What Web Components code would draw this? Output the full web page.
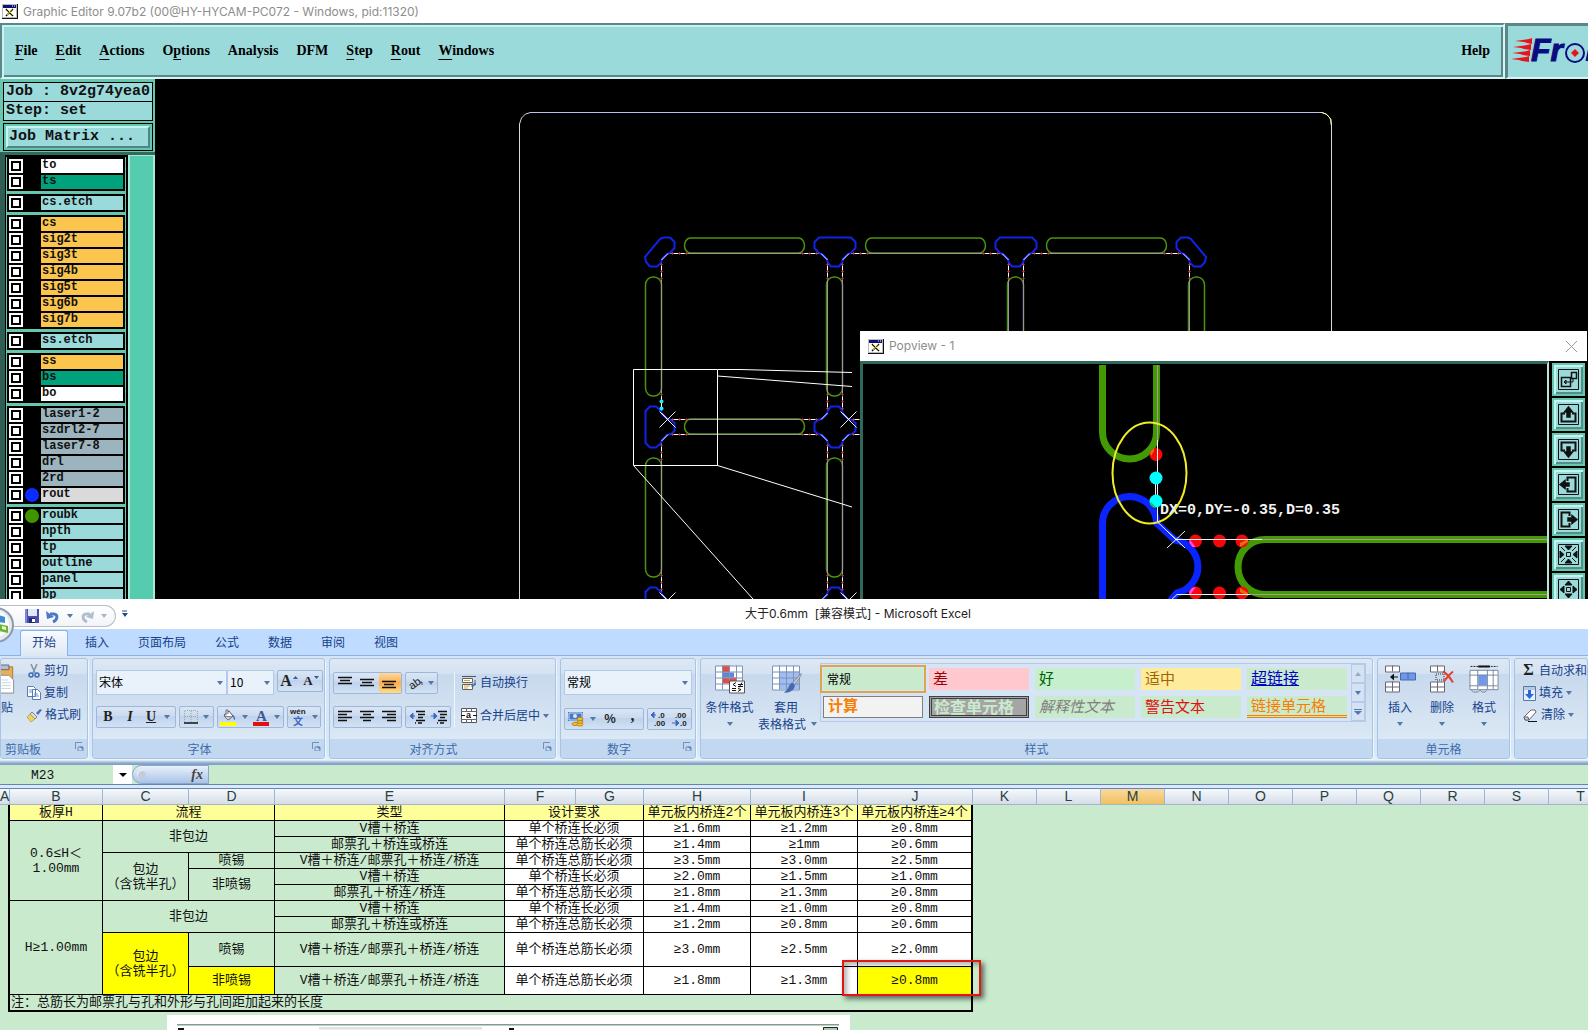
<!DOCTYPE html>
<html lang="zh-CN">
<head>
<meta charset="utf-8">
<title>Graphic Editor and Excel</title>
<style>
html,body{margin:0;height:100%}
body{font-family:"Noto Sans","Noto Sans CJK SC",sans-serif;overflow:hidden;background:#fff}
</style>
</head>
<body>
<desk-top></desk-top>
<script>
const define=(name,css,html,init)=>customElements.define(name,class extends HTMLElement{
  constructor(){super();this.attachShadow({mode:'open'})}
  connectedCallback(){
    const t=document.createElement('template');
    t.innerHTML=`<style>*{box-sizing:border-box}button{font:inherit;color:inherit;background:none;border:0;padding:0;margin:0}${css}</style>${typeof html==='function'?html(this):html}`;
    this.shadowRoot.replaceChildren(t.content.cloneNode(true));
    if(init)init(this);
  }});
const svg=(w,h,body,extra='')=>`<svg width="${w}" height="${h}" viewBox="0 0 ${w} ${h}" fill="none" aria-hidden="true" ${extra}>${body}</svg>`;
const arrow=(c='#5577a5')=>svg(6,4,`<path d="M0 0h6L3 4z" fill="${c}"/>`);

define('desk-top',':host{display:flex;flex-direction:column;height:100vh}cam-editor{flex:1 1 0;min-height:0}excel-app{flex:none}',
'<cam-editor></cam-editor><excel-app></excel-app>');

/* ---------- Graphic editor ---------- */
const appIcon=svg(16,15,'<path d="M0 0h16v15H0z" fill="#111"/><path d="M0 0h15v14H0z" fill="#bbb"/><path d="M1 4h13v9H1z" fill="#fff"/><path d="M1 1h13v3H1z" fill="#10107a"/><path d="M10 2h1m1 0h1" stroke="#fff"/><path d="M4 5l7 7M11 5l-3 3-4 4" stroke="#111" stroke-width="1.5"/><path d="M5 5l6 6M10 5l-5 6" stroke="#e8e020"/>');
define('window-title',':host{display:flex;align-items:center;gap:5px;background:#fff;color:#8d8d8d;font:12px/16px Inter,sans-serif;white-space:nowrap}svg{flex:none}button{margin-left:auto;display:flex}',
 el=>appIcon+'<span><slot></slot></span>'+(el.hasAttribute('closable')?`<button aria-label="Close">${svg(11,11,'<path d="M0 0l11 11M11 0L0 11" stroke="#999"/>')}</button>`:''));

define('cam-editor',`
:host{display:flex;flex-direction:column;background:#000;overflow:hidden}
.cap{height:23px;padding:0 2px;flex:none}
header{display:flex;height:56px;flex:none}
cam-menu{flex:1}
.work{flex:1;min-height:0;display:flex;position:relative;overflow:hidden}
cam-sidebar{flex:none;width:155px}
cam-canvas{flex:1;min-width:0}
pop-view{position:absolute;left:860px;right:1px;top:252px;bottom:0}
`,`<window-title class="cap">Graphic Editor 9.07b2 (00@HY-HYCAM-PC072 - Windows, pid:11320)</window-title>
<header><cam-menu></cam-menu><cam-logo></cam-logo></header>
<div class="work"><cam-sidebar></cam-sidebar><cam-canvas></cam-canvas><pop-view></pop-view></div>`);

define('cam-menu',`
:host{display:flex;align-items:center;gap:18px;padding:0 13px 1px 13px;background:#9bdadb;border:2px solid;border-color:#5b8788 #d6f5f4 #d6f5f4 #5b8788;box-shadow:inset 2px 2px #c9f3f3,inset -2px -2px #5b8788;font:bold 14px/20px "Liberation Serif",serif;color:#000}
button{white-space:nowrap}u{text-underline-offset:4px;text-decoration-thickness:1px}button:last-child{margin-left:auto}`,
'<button><u>F</u>ile</button><button><u>E</u>dit</button><button><u>A</u>ctions</button><button>O<u>p</u>tions</button><button>Analysis</button><button>DFM</button><button><u>S</u>tep</button><button><u>R</u>out</button><button><u>W</u>indows</button><button>Help</button>');

define('cam-logo',':host{display:block;width:83px;background:#9bdadb;border:solid;border-width:3px 0 2px 3px;border-color:#5b8788 #5b8788 #d6f5f4 #5b8788;overflow:hidden}',
svg(80,51,`<g fill="#e8141c"><path d="M7 15l14-2 3-1v6l-5-1-3-1z"/><path d="M5 21l14-2 4-1v6l-7-1-3-1z"/><path d="M4 27l15-2 3-1v6l-7-1-3-1z"/><path d="M3 33l15-2 3-1v6l-7-1-3-1z"/></g>
<text x="23" y="35" font-family="Liberation Sans" font-weight="bold" font-style="italic" font-size="32" fill="#0b0b80" stroke="#0b0b80">Fr</text>
<circle cx="67" cy="27" r="9" stroke="#0b0b80" stroke-width="2"/><path d="M67 23l4 4-4 4-4-4z" fill="#e8141c"/><path d="M79 35l3-14" stroke="#0b0b80" stroke-width="3"/>`));

define('layer-row',`
:host{display:flex;height:14px;margin-bottom:2px}
input{appearance:none;margin:0;width:14px;height:14px;border:2px solid #fff;background:#fff;box-shadow:inset 0 0 0 2px #000;flex:none}
i{width:18px;display:flex;align-items:center;justify-content:center;flex:none}i b{width:14px;height:14px;border-radius:7px;background:var(--dot,none)}
label{flex:1;background:var(--bg);font:bold 12px/13px "Liberation Mono",monospace;padding-left:1px;color:#111;overflow:hidden}`,
'<input type="checkbox" id="c"><i><b></b></i><label for="c"><slot></slot></label>');

define('cam-sidebar',`
:host{display:flex;flex-direction:column;background:#66c6ae;padding:3px 2px 0 3px;font:bold 15px/18px "Liberation Mono",monospace;color:#111}
.info{border:1px solid #000;height:20px;background:#9bdadb;padding-left:2px;white-space:nowrap;overflow:hidden;flex:none}
.info+.info{margin-top:-1px}
.mx{margin:2px 0 1px;border:1px solid #000;padding:2px;height:28px;flex:none}
.mx button{width:100%;height:22px;text-align:left;background:#9bdadb;border:2px solid;border-color:#c4f5f0 #4f8588 #4f8588 #c4f5f0;padding-left:1px;line-height:18px}
.low{flex:1;min-height:0;display:flex;margin:0 -2px 0 -3px;border-top:3px solid #2f6a5c;border-left:5px solid #2f5f54}
.list{width:123px;border:1px solid #000;border-width:2px 2px 0 1px;padding:0 1px;overflow:hidden;flex:none}
.g{display:flow-root;background:#000;padding:2px 2px 0 2px;margin-bottom:3px}
.bar{flex:1;background:#55ccad;border:solid #a5ead4;border-width:1px 2px 0 2px}
`,()=>{
 const R=(n,c,d)=>`<layer-row style="--bg:${c}${d?';--dot:'+d:''}">${n}</layer-row>`;
 const O='#fcc64e',B='#9bdadb',G='#00a27c',S='#9cb4bd';
 const groups=[[['to','#fff'],['ts',G]],[['cs.etch',B]],['cs','sig2t','sig3t','sig4b','sig5t','sig6b','sig7b'].map(n=>[n,O]),[['ss.etch',B]],[['ss',O],['bs',G],['bo','#fff']],
 [...['laser1-2','szdrl2-7','laser7-8','drl','2rd'].map(n=>[n,S]),['rout','#dadada','#0a2cff']],[['roubk',B,'#3f9400'],...['npth','tp','outline','panel','bp'].map(n=>[n,B])]];
 return `<div class="info">Job : 8v2g74yea0</div><div class="info">Step: set</div><div class="mx"><button>Job Matrix ...</button></div>
 <div class="low"><div class="list">${groups.map(g=>`<div class="g">${g.map(r=>R(...r)).join('')}</div>`).join('')}</div><div class="bar"></div></div>`;
});

define('cam-canvas',':host{display:block;overflow:hidden;background:#000}svg{display:block}',()=>{
 const P=181;let s='';
 s+='<path d="M519.5 599V124l2-6 4-4 5-1.500H1322l4 1.500 4 4 1.500 6V599" stroke="#d8d8e0"/><path d="M530 112.500H1320" stroke="#b8c0f0"/><path d="M1322 112.500l5 2 4 5v5" stroke="#ffffa0"/>';
 for(let j=0;j<2;j++)for(let i=0;i<3;i++){
  const x=661.5+P*i,y=253.5+P*j;
  s+=`<path d="M${x+6.5} ${y}h153l6.500 6.500v153l-6.500 6.500h-153l-6.500-6.500v-153z" stroke="#fff"/>`;
 }
 for(let j=0;j<2;j++)for(let i=0;i<3;i++)s+=`<rect x="${684.5+P*i}" y="${238+P*j}" width="120" height="15" rx="6" ry="7.500" stroke="#4c9210" stroke-width="1.500"/>`;
 for(let j=0;j<2;j++)for(let i=0;i<4;i++)s+=`<rect x="${645.5+P*i}" y="${277+P*j}" width="16" height="119" rx="7.500" ry="8" stroke="#4c9210" stroke-width="1.500"/>`;
 const T='M-16-8.500H16L20.500-4V2L16 7l-3 1-5 5-1 4-3 3.500h-8L-7 17l-1-4-5-5-3-1-4.500-5v-6z';
 const C='M-9 11L6-7l3-1.500h7L20.500-4V2L16 7l-3 1-5 5-1 4-4 3.500h-7L-8 16z';
 const X='M-4-20.500h8L7-17l1 4 5 5 4 1 3.500 3v8L17 7l-4 1-5 5-1 4-3 3.500h-8L-7 17l-1-4-5-5-4-1-3.500-3v-8L-17-7l4-1 5-5 1-4z';
 const use=(d,x,y,t='')=>`<path d="${d}" transform="translate(${x} ${y}) ${t}" stroke="#1024e8" stroke-width="2"/>`;
 s+=use(C,654,246)+use(C,1197,246,'scale(-1 1)')+use(T,835,246)+use(T,1016,246);
 for(const y of [427,608]){s+=use(T,654,y,'rotate(-90)')+use(X,835,y)+use(X,1016,y)+use(T,1197,y,'rotate(90)');}
 for(let j=0;j<2;j++)for(let i=0;i<3;i++){
  const x=661.5+P*i,y=253.5+P*j;
  s+=`<path d="M${x+6.5} ${y}l-6.500 6.500M${x+159.5} ${y}l6.500 6.500M${x+6.5} ${y+166}l-6.500-6.500M${x+159.5} ${y+166}l6.500-6.500" stroke="#e8e8ff"/>`;
  s+=`<path d="M${x+23} ${y}h120M${x+23} ${y+166}h120M${x} ${y+23}v120" stroke="#9c969c"/><path d="M${x+166} ${y+23}v120" stroke="#9c969c"/>`;
  if(i)s+=`<path d="M${x} ${y+23}v120" stroke="#a08cc0"/>`;
  for(const o of [11,18,25,141,148,155])for(const [a,b] of [[x+o,y],[x+o,y+166],[x,y+o],[x+166,y+o]])
   s+=`<path d="M${a-1.5} ${b}h3M${a} ${b-1.5}v3" stroke="#c43030" stroke-opacity=".75"/>`;
  const mx=x+6,my=y+166;s+=`<path d="M${mx-8} ${my-8}l16 16M${mx+8} ${my-8}l-16 16" stroke="#eee"/>`;
 }
 s+='<g fill="#20f0f0"><circle cx="661.500" cy="401.500" r="2"/><circle cx="661.500" cy="408.500" r="2"/></g>';
 s+='<path d="M633.500 369.500h84v96h-84zM717.500 369.500H740L852 372.500M717.500 376L852 386.500M717.500 465.500L852 507M633.500 465.500L753 599" stroke="#fff"/>';
 return `<svg width="1433" height="520" viewBox="155 79 1433 520" fill="none" role="img" aria-label="Panel layout">${s}</svg>`;
});

define('tool-key',`:host{display:block;height:33px;flex:none}
button{width:100%;height:100%;display:flex;align-items:center;justify-content:center;background:#9bdadb;border:2px solid #66c6ae;box-shadow:inset 2px 2px #c4f5f0,inset -2px -2px #4f9088}`,
el=>{const d={
 zoom:'<path d="M3.500 8.500h9v9h-9zM13.500 3.500h5v6h-5z" stroke-width="1.500"/><path d="M6 13h9v-3M6 13l2-2v4z"/>',
 up:'<path d="M7 9.500H3.500v8h14v-8H14" stroke-width="2"/><path d="M10.500 3l4 5h-8zM9 8h3v5H9z" fill="#111" stroke-width="1.500"/>',
 down:'<path d="M7 11.500H3.500v-8h14v8H14" stroke-width="2"/><path d="M10.500 18l4-5h-8zM9 8h3v5H9z" fill="#111" stroke-width="1.500"/>',
 left:'<path d="M9.500 7V3.500h8v14h-8V14" stroke-width="2"/><path d="M2 10.500l5-4v8zM7 9h4v3H7z" fill="#111" stroke-width="1.500"/>',
 right:'<path d="M11.500 7V3.500h-8v14h8V14" stroke-width="2"/><path d="M19 10.500l-5-4v8zM10 9h4v3h-4z" fill="#111" stroke-width="1.500"/>',
 shrink:'<path d="M8.500 8.500h4v4h-4z"/><path d="M7 2h7l-3.500 4zM7 19h7l-3.500-4zM2 7v7l4-3.500zM19 7v7l-4-3.500zM3 3l4 4M18 3l-4 4M3 18l4-4M18 18l-4-4" fill="#111"/>',
 grow:'<path d="M8.500 8.500h4v4h-4z"/><path d="M7 6h7l-3.500-4zM7 15h7l-3.500 4zM6 7v7l-4-3.500zM15 7v7l4-3.500z" fill="#111"/>'
 }[el.getAttribute('icon')];
 return `<button aria-label="${el.getAttribute('icon')}">${svg(21,21,`<path d="M.5.5h20v20H.5z" stroke="#111"/><g stroke="#111">${d}</g>`)}</button>`});

define('pop-view',`
:host{display:flex;flex-direction:column;background:#000}
.cap{height:30px;padding:0 10px 0 8px;flex:none}
.b{flex:1;min-height:0;display:flex;overflow:hidden}
.v{flex:1;min-width:0;border:solid;border-width:3px 2px 0 3px;border-color:#30695c #b4e6da #000 #30695c;overflow:hidden}
.v svg{display:block}
.t{width:38px;padding:2px 2px 0 3px;display:flex;flex-direction:column;gap:2px;flex:none}
`,`<window-title class="cap" closable>Popview - 1</window-title>
<div class="b"><div class="v"><svg width="684" height="235" viewBox="863 364 684 235" fill="none" role="img" aria-label="Magnified view">
<g stroke="#439a05" stroke-width="7"><path d="M1102.500 365V432a27 27 0 0 0 54 0V365"/><path d="M1547 539.500H1265a27 27.500 0 0 0 0 55H1547"/></g>
<path d="M1102.500 600V524a27 27 0 0 1 54-1L1175 540a27 27 0 0 1 2 53l-7 8" stroke="#0a24ff" stroke-width="7"/>
<g fill="#f60808"><circle cx="1156" cy="454.500" r="6.500"/><circle cx="1195.500" cy="541" r="6.500"/><circle cx="1219.500" cy="541" r="6.500"/><circle cx="1242" cy="541" r="6.500"/><circle cx="1195.500" cy="593" r="6.500"/><circle cx="1219.500" cy="593" r="6.500"/><circle cx="1242" cy="593" r="6.500"/></g>
<g fill="#ff48ff"><path d="M1189.500 539l6 8-3 0-3-4zM1190 595l6-8-4 1-3 4z"/></g><g fill="#e07010"><path d="M1240 547l8-5v-3l-8 4zM1240 588l8 5v3l-8-4zM1150 452l4-4v3l-3 5z"/></g>
<path d="M1157.500 365V440M1262 539.500H1547M1250 594.500H1547" stroke="#a8989c"/>
<path d="M1157.500 440V522L1176 539.500H1262M1155.500 478v23M1170 601l7-6.500h73M1167 531l18 17M1185 531l-18 17" stroke="#f4f4f4"/>
<g fill="#0ff"><circle cx="1156" cy="478" r="6.500"/><circle cx="1156" cy="501" r="6.500"/></g><path d="M1151 502l5 5.500h-3l-3-3z" fill="#20c040"/>
<ellipse cx="1149.500" cy="473" rx="37" ry="50.500" stroke="#f0ec28" stroke-width="2"/>
<text x="1160" y="514" font-family="Liberation Mono" font-size="15" font-weight="bold" fill="#f2f2f2">DX=0,DY=-0.35,D=0.35</text>
</svg></div><div class="t"><tool-key icon="zoom"></tool-key><tool-key icon="up"></tool-key><tool-key icon="down"></tool-key><tool-key icon="left"></tool-key><tool-key icon="right"></tool-key><tool-key icon="shrink"></tool-key><tool-key icon="grow"></tool-key></div></div>`);

/* ---------- Spreadsheet ---------- */
define('excel-app',`:host{display:block;background:#c9eacd;font:12px/16px "Noto Sans CJK SC",sans-serif;color:#15428b}`,
'<quick-bar></quick-bar><ribbon-tabs></ribbon-tabs><ribbon-panel></ribbon-panel><formula-bar></formula-bar><work-sheet></work-sheet>');

const disk=svg(14,14,'<path d="M0 0h14v14H0z" fill="#4a4fae"/><path d="M3 0h9v7H3z" fill="#dfe8f8"/><path d="M0 0h2v14H0z" fill="#7d86d8"/><path d="M4 9h6v5H4z" fill="#222a70"/><path d="M7 10h3v3H7z" fill="#fff"/>');
const undo=c=>svg(14,14,`<path d="M4 5h4c4 0 4 6-1 8" stroke="${c}" stroke-width="3"/><path d="M0 2l1 8 7-2z" fill="${c}"/>`);
define('quick-bar',`
:host{display:flex;height:30px;background:#fff;position:relative;align-items:center}
.pill{width:116px;height:22px;display:flex;align-items:center;gap:7px;padding-left:25px;margin-top:3px;border:1px solid #b9bdc6;border-left:0;border-radius:0 11px 11px 0;background:linear-gradient(#fff,#f2f4f8);flex:none}
button{display:flex}.r svg{transform:scaleX(-1)}
.title{flex:1;text-align:center;color:#222;font-family:Inter,"Noto Sans CJK SC",sans-serif;white-space:pre;padding-right:1px}
.m{margin-left:5px}.orb{position:absolute;left:-22px;top:8px;z-index:2}`,
`<button class="orb" aria-label="Office">${svg(36,37,'<circle cx="18" cy="18" r="17" fill="#e6eaf0" stroke="#8b98ad" stroke-width="2"/><circle cx="18" cy="17" r="13" fill="#f8fafc"/><path d="M20 8l7 2v6l-7-1z" fill="#3c8ed0"/><path d="M21 17l9 2v7l-9-2z" fill="#6cb52e"/><path d="M24 19l4 1v3l-4-1z" fill="#e9f7d8"/>')}</button>
<div class="pill"><button aria-label="Save">${disk}</button><button aria-label="Undo">${undo('#4c78c8')}</button><button aria-label="Undo list">${arrow()}</button><button class="r" aria-label="Redo">${undo('#b0bfd0')}</button><button aria-label="Redo list">${arrow('#a7b4c6')}</button></div>
<button class="m" aria-label="Customize">${svg(8,8,'<path d="M1 1h5" stroke="#234a80"/><path d="M1 3h6L4 7z" fill="#234a80"/>')}</button><div class="title">大于0.6mm  [兼容模式] - Microsoft Excel</div>`);

define('ribbon-tabs',`:host{display:flex;gap:5px;height:27px;padding:1px 0 0 20px;background:#bfdbff;border-bottom:1px solid #8db2e3}
button{padding:0 12px 2px;height:26px;line-height:22px;white-space:nowrap}
.on{background:linear-gradient(#f8fbff,#dde8f5);border:1px solid #8db2e3;border-bottom:0;border-radius:3px 3px 0 0;padding:0 11px 3px}`,
'<button class="on">开始</button><button>插入</button><button>页面布局</button><button>公式</button><button>数据</button><button>审阅</button><button>视图</button>');

define('ribbon-group',`
:host{display:flex;flex-direction:column;height:101px;flex:none;border:1px solid #a9c3e2;border-radius:3px;background:linear-gradient(#dde8f5 0,#d5e2f1 15px,#c8d9ed 15px,#dbe8f5 80px);box-shadow:1px 1px #edf5ff;overflow:hidden}
.c{height:80px;display:flex}
footer{height:19px;background:#c1d8f0;color:#3e6aaa;display:flex;align-items:center;line-height:18px;white-space:nowrap}
span{flex:1;text-align:center}span.m{padding-right:var(--shift,6px)}footer svg{margin:0 3px 5px 0}`,
el=>`<div class="c"><slot></slot></div><footer><span${el.hasAttribute('more')?' class="m"':''}>${el.getAttribute('label')||''}</span>${el.hasAttribute('more')?svg(9,9,'<path d="M.5 7V.5H7M3 5h5v4H3z" stroke="#7390b8"/><path d="M4 4l4 4V5z" fill="#5f7fae"/>'):''}</footer>`);
define('key-group',`:host{display:flex;height:22px;border:1px solid #9db7dc;border-radius:2px;background:linear-gradient(#d9e6f5,#cbdaef 45%,#bfd2ec 45%,#d2e2f4);flex:none}
::slotted(*){flex:1;display:flex;align-items:center;justify-content:center;gap:5px}`,'<slot></slot>');
define('combo-box',`:host{display:grid;height:25px;align-items:center}
select,svg{grid-area:1/1}select{appearance:none;width:100%;height:25px;margin:0;padding:0 2px 3px;background:#e9f1fb;border:1px solid #b3cbe8;border-radius:0;font:12px "Noto Sans CJK SC",sans-serif;color:#000}
svg{justify-self:end;margin-right:4px}`,el=>`<select aria-label="${el.getAttribute('name')}"><option>${el.getAttribute('value')}</option></select>${arrow()}`);

const lines=(a,y=0)=>svg(15,14,a.map(([x,w],i)=>`<path d="M${x} ${y+i*3+1.5}h${w}" stroke="#111" stroke-width="1.500"/>`).join(''));
const ic={
 cut:svg(14,14,'<path d="M4 0l4 9M10 0L6 9" stroke="#8090a8" stroke-width="1.500"/><circle cx="4" cy="11" r="2" stroke="#3c6ab8" stroke-width="1.500"/><circle cx="10" cy="11" r="2" stroke="#3c6ab8" stroke-width="1.500"/>'),
 copy:svg(14,14,'<path d="M.5.5h6l2 2v8h-8zM5.500 3.500h5l3 3v7h-8z" fill="#fff" stroke="#5578b8"/><path d="M2 4h3M2 6h3M7 8h4M7 10h5" stroke="#6c92d8"/>'),
 brush:svg(15,14,'<path d="M9 5l4-4 2 1-4 5z" fill="#5570b0"/><path d="M5 4l5 5-2 2-5-5z" fill="#d8dce8" stroke="#788"/><path d="M3 6l5 5-4 3-4-5z" fill="#f0d060" stroke="#b89430" stroke-width=".7"/>'),
 border:svg(14,14,'<path d="M.5 1v11M7 1v11M13.500 1v11M1 .5h12M1 6.500h12" stroke="#9aa" stroke-dasharray="1 1"/><path d="M0 13h14" stroke="#111" stroke-width="1.500"/>'),
 fill:svg(17,17,'<path d="M4 6l5-4 4 5-5 4z" fill="#fff" stroke="#456"/><path d="M6 6V1h2v4M4 7l8 1-4 3z" stroke="#777" fill="#dce"/><path d="M13 6c2 1 2 3 2 5-1 0-2-2-2-5z" fill="#3c6ab8"/><path d="M0 13h16v4H0z" fill="#ff0"/>'),
 wrap:svg(16,16,'<path d="M1 1.500h14" stroke="#555"/><path d="M1.500 3.500h10v4h-10zM1.500 9.500h10v5h-10z" fill="#fff" stroke="#665"/><path d="M3 5.500h6M3 11h6M3 13h4" stroke="#e09848"/><path d="M14 5v4l-2 2M15 9l-4 0v3z" stroke="#4468a8"/>'),
 merge:svg(16,15,'<path d="M.5.5h15v14H.5z" fill="#fff" stroke="#555"/><path d="M0 3.500h16M0 11.500h16M5.500 0v3M10.500 0v3M5.500 12v3M10.500 12v3" stroke="#666"/><path d="M0 7.500h4M12 7.500h4" stroke="#111"/><text x="5" y="10" font-family="Liberation Sans" font-size="9" font-weight="bold" fill="#111">a</text>'),
 money:svg(17,16,'<path d="M0 1h15v9H0z" fill="#4878c0"/><path d="M1 2h13v7H1z" stroke="#c8dcf8"/><circle cx="7" cy="5" r="2" fill="#d8e8ff"/><ellipse cx="12" cy="8" rx="3" ry="1.500" fill="#f4c430" stroke="#b98a1c"/><ellipse cx="12" cy="11" rx="3" ry="1.500" fill="#f4c430" stroke="#b98a1c"/><ellipse cx="7" cy="13" rx="3" ry="1.500" fill="#f4c430" stroke="#b98a1c"/><ellipse cx="12" cy="13.500" rx="3" ry="1.500" fill="#f4c430" stroke="#b98a1c"/>'),
 cond:svg(30,28,'<path d="M.5.5h27v24H.5z" fill="#fff"/><path d="M7 0h7v7H7zM7 12h14v6H7z" fill="#e84a3c"/><path d="M7 7h12v5H7z" fill="#5a86dc"/><path d="M.5.5h27v24H.5zM7.500 0v24M14.500 0v24M21.500 0v24M0 6.500h27M0 12.500h27M0 18.500h27" stroke="#7d94b8"/><path d="M14.500 15.500h15v12h-15z" fill="#fff" stroke="#555"/><path d="M21 17l-3 2 3 2M17 23h4M17 25h4M23 19h5M23 21h5M27 17l-3 5M23 23l3 1-3 2" stroke="#111"/>'),
 table:svg(30,28,'<path d="M.5.5h27v24H.5z" fill="#fff"/><path d="M7 6h20v18H7z" fill="#9fbdf0"/><path d="M.5.5h27v24H.5zM7.500 0v24M14.500 0v24M21.500 0v24M0 6.500h27M0 12.500h27M0 18.500h27" stroke="#7d94b8"/><path d="M29 8l-8 9 2 2 6-9z" fill="#c8ccd4" stroke="#777" stroke-width=".7"/><path d="M20 17l3 3c-1 5-6 8-11 7 4-2 4-7 8-10z" fill="#4668b0"/>'),
 ins:svg(31,28,'<path d="M.5.5h14v6H.5zM.5 16.500h14v10H.5zM7.500 0v6M7.500 16v10M0 21.500h14" fill="#fff" stroke="#667"/><path d="M15.500 7.500h15v7h-15zM23 7v7" fill="#7097e4" stroke="#4468b0"/><path d="M13 11.500H8" stroke="#111"/><path d="M9 8v7l-4-3.500z" fill="#111"/>'),
 del:svg(25,28,'<path d="M.5.5h14v6H.5zM.5 16.500h14v10H.5zM7.500 0v6M7.500 16v10M0 21.500h14" fill="#fff" stroke="#667"/><path d="M6 8.500h8v6H6z" stroke="#333" stroke-dasharray="1 1"/><path d="M13 6c4 2 7 6 10 11M23 6c-4 3-7 7-9 10" stroke="#e4402c" stroke-width="2"/>'),
 fmt:svg(31,30,'<path d="M1 1.500h28" stroke="#222" stroke-dasharray="2 1"/><path d="M9 1.500h12" stroke="#111" stroke-width="2"/><path d="M.5 5.500h29v20H.5z" fill="#fff"/><path d="M9 10h9v11H9z" fill="#6f98e8"/><path d="M.5 5.500h29v20H.5zM8.500 5v20M18.500 5v20M24.500 5v20M0 10.500h29M0 21.500h29M2 26l2 2h5l2-2 2 2h3l2-2" stroke="#7888a0"/>'),
 down:svg(13,15,'<path d="M.5.5h12v14H.5z" fill="#e4eefc" stroke="#5878a8"/><path d="M1 1h11v3H1z" fill="#b8c8e0"/><path d="M5 4h3v4h3l-4.500 5L2 8h3z" fill="#2c68d8"/>'),
 erase:svg(15,13,'<path d="M1 8l7-7h4l1 2-7 8H2z" fill="#fff" stroke="#667"/><path d="M1 8h4l1 3H2z" fill="#c0c8d8" stroke="#667"/><path d="M5 12.500h9" stroke="#111"/>'),
 paste:svg(14,31,'<path d="M-8 2H12v26H-8z" fill="#e8b050" stroke="#a87830"/><path d="M-4 0H8v5H-4z" fill="#b8bcc8" stroke="#667"/><path d="M-4 11H8l5 5v14H-4z" fill="#fff" stroke="#889"/><path d="M0 16h7M0 19h10M0 22h10M0 25h10" stroke="#c8d0dc"/>')
};
const L4=[[0,14],[0,9],[0,14],[0,9]],C4=[[0,14],[3,8],[0,14],[3,8]],R4=[[0,14],[5,9],[0,14],[5,9]],M3=[[0,14],[2,10],[0,14]];
const indent=d=>svg(16,14,`<path d="M7 1.500h9M9 4.500h7M9 7.500h5M7 10.500h9M6 13h1M9 13h4" stroke="#111" stroke-width="1.500"/><path d="${d?'M0 6h3M3 3v6l3-3z':'M3 6h3M4 3v6L1 6z'}" stroke="#3c6ac0" fill="#3c6ac0"/>`);

define('ribbon-panel',`
:host{display:flex;gap:4px;height:109px;padding:2px 0 0;background:linear-gradient(#d5e4f6,#d8e8f8 98px,#e5f2fd 104px,#8eaccc 107px,#7c9cc0);overflow:hidden;white-space:nowrap}
svg{flex:none;overflow:visible}
.col{display:flex;flex-direction:column}.row{display:flex;align-items:center}
.rows{padding:11px 3px 0;gap:11px;width:100%}.rows>.row{height:25px;gap:3px}.rows>.row+.row{height:22px}
.cmd{display:flex;align-items:center;gap:3px;height:22px}
.cmd span,.cmd b{font-weight:400;padding-bottom:2px}
.big{display:flex;flex-direction:column;align-items:center;padding-top:6px;height:76px}
.big b{font-weight:400;line-height:17px;display:flex;align-items:center;gap:5px}.big>svg:first-child{margin-bottom:4px;height:29px}
.big>svg:last-child{margin-top:7px}
.clip .big{width:14px;align-items:flex-start}.clip .big b{margin-left:-12px}
.clip .col{padding:1px 0 0 12px}
.ser{font:bold 16px "Liberation Serif",serif;color:#222}
.gal{display:flex;margin:4px 0 0 8px;height:59px;border:1px solid #b6cae6;background:#d6e5f6}
.sw{display:grid;grid-template-columns:repeat(5,100px);grid-auto-rows:22px;gap:6px;padding:4px 3px 0 2px;width:530px}
.sw button{text-align:left;padding:0 0 4px 4px;font-size:15px;line-height:17px;overflow:hidden;background:#c9eacd}
.sc{display:flex;flex-direction:column;width:14px}.sc button{flex:1;display:flex;align-items:center;justify-content:center;border:1px solid #b6cae6;background:#d3e2f4}
.cells{width:100%;padding-left:1px;align-items:flex-start}.cells button{width:42px;margin:0}
`,`
<ribbon-group class="clip" label="剪贴板" more style="width:88px;--shift:30px"><button class="big">${ic.paste}<b>粘贴</b></button><div class="col"><button class="cmd">${ic.cut}<b>剪切</b></button><button class="cmd">${ic.copy}<b>复制</b></button><button class="cmd">${ic.brush}<b>格式刷</b></button></div></ribbon-group>
<ribbon-group label="字体" more style="width:233px"><div class="rows col">
 <div class="row" style="align-items:flex-start"><div class="row"><combo-box name="字体" value="宋体" style="width:131px"></combo-box><combo-box name="字号" value="10" style="width:47px"></combo-box></div>
 <key-group style="width:46px"><button class="ser" style="gap:1px">A${svg(5,12,'<path d="M0 4h5L2.500 1z" fill="#345a98"/>')}</button><button class="ser" style="font-size:13px;gap:1px">A${svg(5,12,'<path d="M0 1h5L2.500 4z" fill="#345a98"/>')}</button></key-group></div>
 <div class="row"><key-group style="width:80px"><button class="ser" style="flex:0 0 22px;font-size:14px">B</button><button class="ser" style="flex:0 0 22px;font-size:14px;font-style:italic">I</button><button class="ser" style="font-size:14px;gap:8px"><u>U</u>${arrow()}</button></key-group><key-group style="width:35px"><button>${ic.border}${arrow()}</button></key-group>
 <key-group style="width:67px"><button>${ic.fill}${arrow()}</button><button>${svg(16,17,'<text x="3" y="12" font-family="Liberation Serif" font-size="15" font-weight="bold" fill="#3c5a94">A</text><path d="M0 13h16v4H0z" fill="#e01010"/>')}${arrow()}</button></key-group><key-group style="width:34px"><button>${svg(17,18,'<text x="0" y="6" font-family="Liberation Sans" font-size="8" font-weight="bold" fill="#222">wén</text><text x="3" y="17" font-family="Noto Sans CJK SC" font-size="10" font-weight="bold" fill="#3c68c0">文</text>')}${arrow()}</button></key-group></div>
</div></ribbon-group>
<ribbon-group label="对齐方式" more style="width:227px"><div class="row" style="width:100%"><div class="rows col" style="width:124px;height:100%">
 <div class="row"><key-group style="width:69px"><button>${lines(M3)}</button><button>${lines(M3,2)}</button><button style="background:linear-gradient(#fbd9a0,#fdaf4c 50%,#fddc88)">${lines(M3,4)}</button></key-group><key-group style="width:33px"><button>${svg(14,14,'<text x="0" y="11" font-family="Liberation Sans" font-size="11" transform="rotate(-35 6 8)" fill="#222">ab</text><path d="M4 13l9-7M13 6v3M13 6h-3" stroke="#555"/>')}${arrow()}</button></key-group></div>
 <div class="row"><key-group style="width:69px"><button>${lines(L4)}</button><button>${lines(C4)}</button><button>${lines(R4)}</button></key-group><key-group style="width:46px"><button>${indent(0)}</button><button>${indent(1)}</button></key-group></div></div>
 <div class="col" style="border-left:1px solid #eef5fd;padding-left:6px;gap:11px"><button class="cmd">${ic.wrap}<b>自动换行</b></button><button class="cmd">${ic.merge}<b>合并后居中</b> ${arrow()}</button></div></div></ribbon-group>
<ribbon-group label="数字" more style="width:136px"><div class="rows col"><combo-box name="数字格式" value="常规"></combo-box>
 <div class="row"><key-group style="width:80px"><button>${ic.money}${arrow()}</button><button style="flex:0 0 24px;color:#222;font-weight:bold;padding-bottom:2px">%</button><button class="ser" style="flex:0 0 21px;padding-bottom:6px">,</button></key-group><key-group style="width:45px"><button>${svg(16,16,'<text x="7" y="7" font-family="Liberation Sans" font-size="8" font-weight="bold" fill="#222">.0</text><text x="3" y="15" font-family="Liberation Sans" font-size="8" font-weight="bold" fill="#222">.00</text><path d="M5 4H2M3 1v6L0 4z" stroke="#3c6ac0" fill="#3c6ac0"/>')}</button><button>${svg(16,16,'<text x="3" y="7" font-family="Liberation Sans" font-size="8" font-weight="bold" fill="#222">.00</text><text x="8" y="15" font-family="Liberation Sans" font-size="8" font-weight="bold" fill="#222">.0</text><path d="M0 12h4M4 9v6l3-3z" stroke="#3c6ac0" fill="#3c6ac0"/>')}</button></key-group></div></div></ribbon-group>
<ribbon-group label="样式" style="width:673px"><button class="big" style="width:57px">${ic.cond}<b>条件格式</b>${arrow()}</button><button class="big" style="width:54px;align-items:flex-start"><svg width="44" height="28" viewBox="-14 0 44 28" fill="none">${ic.table}</svg><b style="padding-left:16px">套用</b><b>表格格式${arrow()}</b></button>
 <div class="gal"><div class="sw">
 <button style="font-size:12px;color:#000;padding-bottom:2px;outline:2px solid #dfa548;outline-offset:1px">常规</button><button style="background:#ffc7ce;color:#9c0006">差</button><button style="background:#c6efce;color:#006100">好</button><button style="background:#ffeb9c;color:#9c6500">适中</button><button style="color:#0000c8;font-size:16px;text-decoration:underline">超链接</button>
 <button style="background:#f2f2f2;color:#fa7d00;font-weight:bold;border:1px solid #7f7f7f;line-height:16px">计算</button><button style="background:#a5a5a5;color:#c9eacd;font-size:16px;font-weight:bold;border:3px double #3f3f3f;padding:0 0 2px 2px;line-height:14px">检查单元格</button><button style="color:#7f7f7f;font-style:italic">解释性文本</button><button style="color:#e01010">警告文本</button><button style="color:#fa7d00;border-bottom:3px double #fa7d00;padding-bottom:2px">链接单元格</button>
 </div><div class="sc"><button aria-label="Up">${svg(6,4,'<path d="M0 4h6L3 0z" fill="#9ab"/>')}</button><button aria-label="Down">${arrow()}</button><button aria-label="More">${svg(8,8,'<path d="M0 1.500h8" stroke="#5577a5"/><path d="M0 3h8L4 7z" fill="#5577a5"/>')}</button></div></div></ribbon-group>
<ribbon-group label="单元格" style="width:133px"><div class="row cells"><button class="big">${ic.ins}<b>插入</b>${arrow()}</button><button class="big">${ic.del}<b>删除</b>${arrow()}</button><button class="big">${ic.fmt}<b>格式</b>${arrow()}</button></div></ribbon-group>
<ribbon-group style="flex:1"><div class="col" style="padding:1px 0 0 8px"><button class="cmd" style="gap:5px"><b class="ser" style="width:11px;font-weight:bold">Σ</b><b>自动求和</b></button><button class="cmd">${ic.down}<b>填充</b> ${arrow()}</button><button class="cmd">${ic.erase}<b>清除</b> ${arrow()}</button></div></ribbon-group>
`);

define('formula-bar',`
:host{display:flex;height:23px;padding-bottom:3px;background:linear-gradient(#c9eacd 19px,#5f86b4 19px,#5f86b4 20px,#dbe9fa 20px)}
input{margin:0;border:0;padding:0;font:13px/19px "Liberation Mono",monospace;color:#111;background:#c9eacd;height:19px;border-radius:0;min-width:0}
.n{width:113px;padding:2px 0 0 31px}.f{flex:1}
.d{width:19px;background:#fff;height:19px;display:flex;align-items:center;justify-content:center}
.p{width:77px;height:19px;background:linear-gradient(#e8f0fa,#a9c4e8);border:1px solid #8ba6cc;border-radius:10px 0 0 10px;display:flex;align-items:center;justify-content:space-between;padding:0 5px 0 4px;font:italic bold 14px "Liberation Serif",serif;color:#444}
.p i{width:9px;height:9px;border-radius:5px;background:#c4ccd8;box-shadow:inset 1px 1px #eef}`,
`<input class="n" aria-label="Name box" value="M23"><button class="d" aria-label="Names">${svg(8,4,'<path d="M0 0h8L4 4z" fill="#000"/>')}</button><div class="p"><i></i><button aria-label="Insert function">fx</button></div><input class="f" aria-label="Formula">`);

define('work-sheet',`
:host{display:block;position:relative;overflow:hidden;background:#c9eacd;color:#111;height:242px}
table{border-collapse:separate;border-spacing:0;table-layout:fixed;width:1613px;font:13px/15px "Liberation Mono","Noto Sans CJK SC",monospace}
td,tbody th{padding:0;border:solid #000;border-width:0 1px 1px 0;text-align:center;vertical-align:middle;font-weight:400;white-space:nowrap;overflow:hidden}
thead th{height:17px;padding:0;font:14px/15px "Liberation Sans",sans-serif;color:#27413e;background:linear-gradient(#f6f9fc,#d6dde8);border:solid #9eb6ce;border-width:1px 1px 1px 0;border-top-color:#5f86b4}
thead .on{background:linear-gradient(#f9d99f,#f1c15f)}
.a{border-width:0 2px 0 0}tbody th{background:#ff9}.w{background:#fff}.y{background:#ff0}
.j{border-right-width:2px}.note{text-align:left;border-bottom-width:2px;border-right-width:2px;padding-left:1px}
.mark{position:absolute;left:842px;top:172px;width:139px;height:36px;border:2px solid #e01812;box-shadow:3px 3px 5px rgba(0,0,0,.55),inset 3px 3px 5px rgba(0,0,0,.3)}
.pic{margin:3px 0 0 167px;width:683px;height:20px;background:#fff;padding:9px 11px 0 10px}
.pic svg{display:block}
`,()=>{
 const W=[10,93,86,86,230,71,68,107,107,115,...Array(10).fill(64)];
 const A='V槽＋桥连',B='邮票孔＋桥连或桥连',C='V槽＋桥连/邮票孔＋桥连/桥连',D='邮票孔＋桥连/桥连',S='单个桥连长必须',Z='单个桥连总筋长必须';
 const rows=[
 [16,'<td rowspan="5">0.6≤H＜<br>1.00mm</td><td colspan="2" rowspan="2">非包边</td>',A,S,'1.6','1.2','0.8'],
 [16,'',B,Z,'1.4','1','0.6'],
 [16,'<td rowspan="3">包边<br>（含铣半孔）</td><td>喷锡</td>',C,Z,'3.5','3.0','2.5'],
 [16,'<td rowspan="2">非喷锡</td>',A,S,'2.0','1.5','1.0'],
 [16,'',D,Z,'1.8','1.3','0.8'],
 [16,'<td rowspan="4">H≥1.00mm</td><td colspan="2" rowspan="2">非包边</td>',A,S,'1.4','1.0','0.8'],
 [16,'',B,Z,'1.2','0.8','0.6'],
 [34,'<td rowspan="2" class="y">包边<br>（含铣半孔）</td><td>喷锡</td>',C,Z,'3.0','2.5','2.0'],
 [28,'<td class="y">非喷锡</td>',C,Z,'1.8','1.3','0.8']];
 return `<table><colgroup>${W.map(w=>`<col style="width:${w}px">`).join('')}</colgroup><thead><tr>${[...'ABCDEFGHIJKLMNOPQRST'].map(c=>`<th${c==='M'?' class="on"':''}>${c}</th>`).join('')}</tr></thead><tbody>
 <tr style="height:16px"><td class="a" rowspan="11"></td><th>板厚H</th><th colspan="2">流程</th><th>类型</th><th colspan="2">设计要求</th><th>单元板内桥连2个</th><th>单元板内桥连3个</th><th class="j">单元板内桥连≥4个</th></tr>
 ${rows.map(([h,pre,e,f,...v],i)=>`<tr style="height:${h}px">${pre}<td>${e}</td><td class="w" colspan="2">${f}</td>${v.map((x,k)=>`<td class="${k===2?'j ':''}${i===8&&k===2?'y':'w'}">≥${x}mm</td>`).join('')}</tr>`).join('')}
 <tr style="height:17px"><td class="note" colspan="9">注：总筋长为邮票孔与孔和外形与孔间距加起来的长度</td></tr></tbody></table>
 <div class="mark"></div><div class="pic">${svg(662,10,'<path d="M0 .5h662" stroke="#7f9f8c" stroke-width="2"/><path d="M1 4h6v2H3v4H1zM332 4h5v3h-5z" fill="#111"/><path d="M142 4h163v6H142z" fill="#eef0f0"/><path d="M142 4h163" stroke="#ccc"/><path d="M646.500 3.500h14v7h-14z" fill="#a9cdb4" stroke="#222"/>')}</div>`;
});
</script>
</body>
</html>
